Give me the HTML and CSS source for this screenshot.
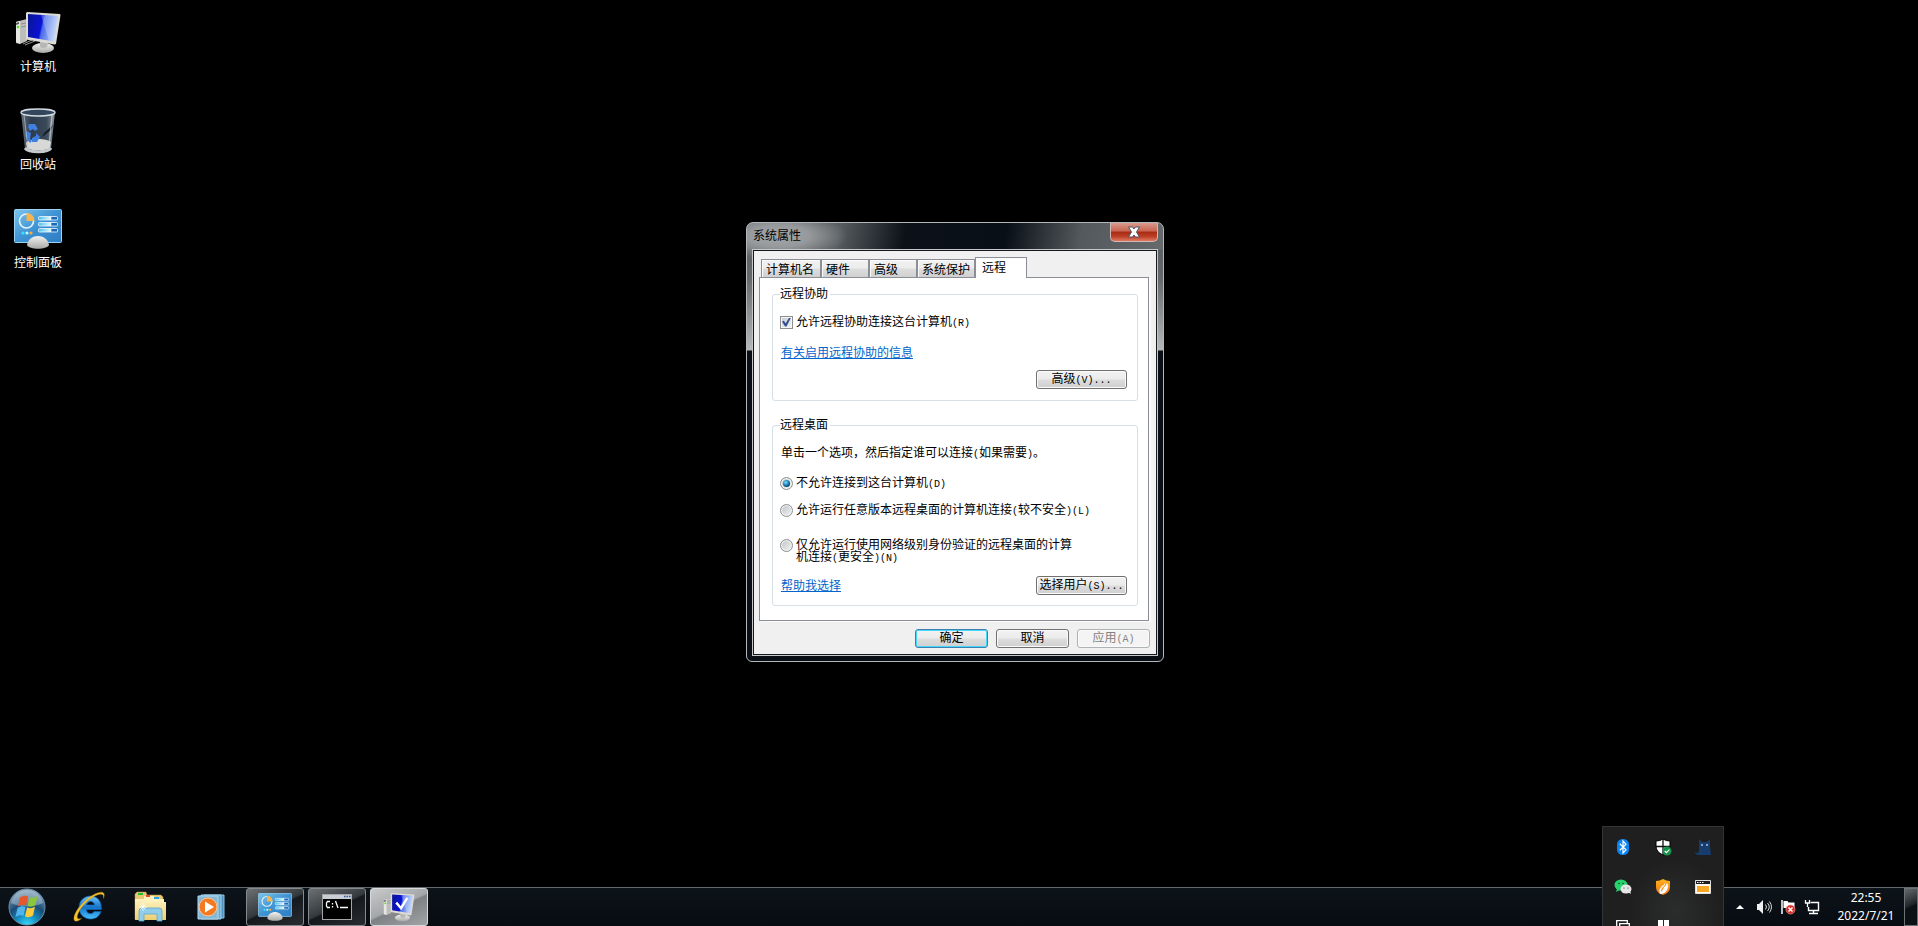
FILE: index.html
```
<!DOCTYPE html>
<html lang="zh-CN">
<head>
<meta charset="utf-8">
<title>系统属性</title>
<link rel="stylesheet" href="styles.css">
</head>
<body>
<svg class="defs" aria-hidden="true">
  <defs>
    <linearGradient id="screen" x1="0" y1="0" x2="1" y2="0.2">
      <stop offset="0" stop-color="#0a1690"/><stop offset=".5" stop-color="#0b12d8"/><stop offset=".56" stop-color="#4a6ae8"/><stop offset="1" stop-color="#b4ccf8"/>
    </linearGradient>
    <linearGradient id="silver" x1="0" y1="0" x2="0" y2="1">
      <stop offset="0" stop-color="#f2f2f0"/><stop offset="1" stop-color="#a8a8a5"/>
    </linearGradient>
    <linearGradient id="glass" x1="0" y1="0" x2="1" y2="0">
      <stop offset="0" stop-color="#66727e"/><stop offset=".3" stop-color="#2d3c4c"/><stop offset=".75" stop-color="#3a4a5a"/><stop offset="1" stop-color="#8d959d"/>
    </linearGradient>
    <linearGradient id="panelBlue" x1="0" y1="0" x2="1" y2="1">
      <stop offset="0" stop-color="#7cc4ee"/><stop offset=".5" stop-color="#3f93d2"/><stop offset="1" stop-color="#2d7dc4"/>
    </linearGradient>
    <linearGradient id="bar" x1="0" y1="0" x2="1" y2="0">
      <stop offset="0" stop-color="#3fc0f0"/><stop offset=".65" stop-color="#e8f8ff"/><stop offset=".7" stop-color="#1d67b8"/><stop offset="1" stop-color="#1d67b8"/>
    </linearGradient>
    <radialGradient id="orb" cx=".5" cy="1" r=".95">
      <stop offset="0" stop-color="#39dcff"/><stop offset=".3" stop-color="#1592c4"/><stop offset=".6" stop-color="#1a4c78"/><stop offset="1" stop-color="#7d9cb4"/>
    </radialGradient>
    <linearGradient id="ie" x1="0" y1="0" x2="0" y2="1">
      <stop offset="0" stop-color="#6cc4f8"/><stop offset=".5" stop-color="#1673cc"/><stop offset="1" stop-color="#4ac0f8"/>
    </linearGradient>
    <linearGradient id="folder" x1="0" y1="0" x2="0" y2="1">
      <stop offset="0" stop-color="#fdf3c0"/><stop offset="1" stop-color="#edcf72"/>
    </linearGradient>
    <linearGradient id="flame" x1="0" y1="0" x2="0" y2="1">
      <stop offset="0" stop-color="#ffb01c"/><stop offset="1" stop-color="#f07818"/>
    </linearGradient>
    <symbol id="computer" viewBox="0 0 46 42">
      <path d="M1 10l3-1 8-2v22l-7 3-4-1z" fill="#bdbdba"/><path d="M1 10l4-1v23l-4-2z" fill="#e6e6e3"/><path d="M1 11l3-1v2l-3 1z" fill="#555"/><circle cx="3" cy="15" r="1.300" fill="#4fdc28"/>
      <path d="M6 12l5-1M6 15l5-1M8 32l9-4M10 33l10-4" stroke="#8f8f8c" fill="none"/>
      <ellipse cx="28" cy="36" rx="11" ry="5" fill="url(#silver)"/><path d="M25 28l8 2-1 5q-4 2-7 0z" fill="#b7b7b4"/>
      <path d="M11 1l1-1 33 2 .5 1-4.500 29-1.500.5-28.500-5z" fill="#dddbd6"/><path d="M13 2l30 2-4 25.500-26-4.500z" fill="url(#screen)"/>
      <path d="M26 3l17 1-4 25.500-5-1z" fill="#e4edff" opacity=".28"/>
    </symbol>
    <symbol id="bin" viewBox="0 0 36 46">
      <path d="M1 4l4 37c2 5 24 5 26 0l4-37z" fill="url(#glass)"/>
      <ellipse cx="18" cy="4.500" rx="17" ry="3.500" fill="#33475a" stroke="#d4dce4" stroke-width="1.400"/>
      <path d="M6 35c3-5 20-5 25-1l-1 6c-4 3-20 3-23 0z" fill="#d8d8d6"/>
      <path d="M5 40c4 5 23 5 26 0" stroke="#c6cacc" stroke-width="3" fill="none"/>
      <path d="M33 17l-9 8-2 4 9-7z" fill="#141d28"/>
      <g fill="#3e7fe0"><path d="M9 16l6 0 3 5-3 2-2-2-3 2-2-4z"/><path d="M6 23l5 2-1 6 2 2-2 2-5-7z"/><path d="M12 30l4-2 0-3 4 4-3 5-5 0z"/></g>
      <path d="M4 7l4 33" stroke="#b9c4ce" opacity=".7"/><path d="M32 7l-3 32" stroke="#dbe0e4" stroke-width="1.500" opacity=".6"/>
    </symbol>
    <symbol id="control" viewBox="0 0 48 40">
      <rect x=".5" y=".5" width="47" height="33" rx="1" fill="url(#panelBlue)" stroke="#9bd4f4"/>
      <circle cx="12.500" cy="12" r="7" fill="none" stroke="#e2f5ff" stroke-width="1.600"/>
      <path d="M12.500 12V4c4 0 8 3 8 8z" fill="#f8b34c"/>
      <circle cx="9" cy="24" r="1.600" fill="#39e0ff"/><circle cx="13" cy="24" r="1.600" fill="#bdf5ff"/><circle cx="17" cy="24" r="1.600" fill="#ffab32"/>
      <g fill="url(#bar)" stroke="#f0faff" stroke-width=".8"><rect x="24.500" y="7.500" width="19" height="3.500" rx="1"/><rect x="24.500" y="13.500" width="19" height="3.500" rx="1"/><rect x="24.500" y="19.500" width="19" height="3.500" rx="1"/></g>
      <path d="M13 36c1-6 6-9 11-9s10 3 11 9c-2 5-20 5-22 0z" fill="url(#silver)"/>
    </symbol>
  </defs>
</svg>

<main class="desktop">
  <nav class="shortcuts" aria-label="桌面">
    <a class="shortcut" href="#"><svg width="46" height="42"><use href="#computer"/></svg><span>计算机</span></a>
    <a class="shortcut" href="#"><svg width="36" height="46"><use href="#bin"/></svg><span>回收站</span></a>
    <a class="shortcut" href="#"><svg width="48" height="40"><use href="#control"/></svg><span>控制面板</span></a>
  </nav>

  <section class="window" role="dialog" aria-labelledby="caption">
    <header class="titlebar">
      <h1 id="caption">系统属性</h1>
      <button class="close" type="button" aria-label="关闭"><svg width="14" height="12" viewBox="0 0 14 12"><path d="M1.500 1h4L7 3l1.500-2h4L9.500 6l3 5h-4L7 9l-1.500 2h-4l3-5z" fill="#fff" stroke="#4d5468" stroke-width="1"/></svg></button>
    </header>
    <form class="client">
      <div class="tabs" role="tablist">
        <button class="tab wide" type="button" role="tab">计算机名</button>
        <button class="tab" type="button" role="tab">硬件</button>
        <button class="tab" type="button" role="tab">高级</button>
        <button class="tab wide" type="button" role="tab">系统保护</button>
        <button class="tab selected" type="button" role="tab" aria-selected="true">远程</button>
      </div>
      <div class="panel" role="tabpanel">
        <fieldset>
          <legend>远程协助</legend>
          <label class="choice"><input type="checkbox" checked><span>允许远程协助连接这台计算机<i>(R)</i></span></label>
          <p class="info"><a href="#">有关启用远程协助的信息</a></p>
          <div class="actions"><button class="button large" type="button">高级<i>(V)...</i></button></div>
        </fieldset>
        <fieldset>
          <legend>远程桌面</legend>
          <p>单击一个选项，然后指定谁可以连接<i>(</i>如果需要<i>)</i>。</p>
          <div class="options">
            <label class="choice"><input type="radio" name="rdp" checked><span>不允许连接到这台计算机<i>(D)</i></span></label>
            <label class="choice"><input type="radio" name="rdp"><span>允许运行任意版本远程桌面的计算机连接<i>(</i>较不安全<i>)(L)</i></span></label>
            <label class="choice tight"><input type="radio" name="rdp"><span>仅允许运行使用网络级别身份验证的远程桌面的计算<br>机连接<i>(</i>更安全<i>)(N)</i></span></label>
          </div>
          <div class="actions spread"><a href="#">帮助我选择</a><button class="button large" type="button">选择用户<i>(S)...</i></button></div>
        </fieldset>
      </div>
      <footer class="commands">
        <button class="button default" type="button">确定</button>
        <button class="button" type="button">取消</button>
        <button class="button" type="button" disabled>应用<i>(A)</i></button>
      </footer>
    </form>
  </section>
</main>

<footer class="taskbar">
  <button class="start" type="button" aria-label="开始">
    <svg width="38" height="38" viewBox="0 0 38 38"><circle cx="19" cy="19" r="18" fill="url(#orb)" stroke="#6c8fa6"/><path d="M3 15C5 6 12 2 19 2s14 4 16 13c-9 4-22 5-32 0z" fill="#dfeaf2" opacity=".36"/>
      <path d="M12 9.500c3-2 6-2 8-1l-2 9c-3-1-5-1-8 1z" fill="#e8562a"/><path d="M21.500 9c3 1 5 1 8-1l-2 9c-3 2-5 2-8 1z" fill="#8cc63c"/><path d="M9.500 20c3-2 5-2 8-1l-2 9c-2-1-5-1-8 1z" fill="#52b4ec"/><path d="M19 19.500c3 1 5 1 8-1l-2 9c-3 2-5 2-8 1z" fill="#fccb3a"/></svg>
  </button>
  <button class="pin" type="button" aria-label="Internet Explorer">
    <svg width="34" height="34" viewBox="0 0 34 34"><path d="M18.500 6C12 6 7 11 7 17.500S12 29 18.500 29c5 0 9-2.500 10.500-7.500h-7c-.8 1.500-2 2-3.500 2-2.500 0-4-1.500-4.200-4h15C30 11.500 25.500 6 18.500 6zm-4 9c.5-2.200 2-3.500 4-3.500s3.700 1.300 4 3.500z" fill="url(#ie)" stroke="#0b62ac" stroke-width=".7"/><path d="M31.500 8.500c2-5.500 0-7.500-6-5.500C14 7 1 22 2 29.500c.7 3 4.500 1.500 7.500-1-3.500 1-5 0-4-3.500C8 17 18 7 26.500 4.500c4-1 5.500 0 5 4z" fill="#f8c52c" stroke="#b88510" stroke-width=".4"/></svg>
  </button>
  <button class="pin" type="button" aria-label="资源管理器">
    <svg width="34" height="32" viewBox="0 0 34 32"><path d="M2 3l2-2h9l1 3h14l2 2v22H2z" fill="#e7c873" stroke="#b99748" stroke-width=".5"/><path d="M11 5h10l1 3h9v5H11z" fill="#fff2ba"/><path d="M5 2h5v2H5z" fill="#20bd37"/><path d="M13 4h4v2h-4z" fill="#e24a37"/><path d="M21 6h5v2h-5z" fill="#2fa2e8"/><path d="M2 8h10l2 3h19v18H2z" fill="url(#folder)"/><path d="M6 30V20q0-3 3-3h17q3 0 3 3v10h-5v-7H11v7z" fill="#8fcdeb" stroke="#5aa6d0" stroke-width=".8"/><path d="M10 12v8M6 16h8M7.500 13.500l5 5M12.500 13.500l-5 5" stroke="#fff" stroke-width=".8"/></svg>
  </button>
  <button class="pin" type="button" aria-label="媒体播放器">
    <svg width="28" height="28" viewBox="0 0 28 28"><path d="M7 2h20v23H7z" fill="#4f91bc" stroke="#8dc4e6"/><path d="M4 2h20v24H4z" fill="#6aaacf" stroke="#9fd0ec"/><path d="M1 3h20v23H1z" fill="#86b7d5" stroke="#b2d9ef"/><circle cx="11" cy="14" r="9" fill="#f37a21" stroke="#ffc694"/><path d="M8 8.500v11l9-5.500z" fill="#fff"/></svg>
  </button>
  <div class="tasks">
    <button class="task" type="button" aria-label="控制面板"><svg width="34" height="28"><use href="#control"/></svg></button>
    <button class="task" type="button" aria-label="命令提示符">
      <svg width="30" height="26" viewBox="0 0 30 26"><rect x=".5" y=".5" width="29" height="25" fill="#000" stroke="#a5a5a5"/><path d="M1 1h28v4H1z" fill="#c9ced4"/><path d="M22 2.500h1.500m1 0H26m1 0h1.500" stroke="#2b57a8" stroke-width="1.500"/><path d="M8 7.500H5.500L4.500 9v3l1 1.500H8M10.500 9v1.500m0 1.500v1.500M13.500 7l2.500 7M18 13.500h8" stroke="#fff" stroke-width="1.300" fill="none"/></svg>
    </button>
    <button class="task active" type="button" aria-label="系统属性">
      <svg width="32" height="29" viewBox="0 0 46 42"><use href="#computer" width="46" height="42"/><path d="M19 14l7 8 9-15" stroke="#fff" stroke-width="3.500" fill="none"/></svg>
    </button>
  </div>
  <div class="tray">
    <svg class="edge" width="3" height="4"><path d="M0 .5h2.500V4" stroke="#aaa" fill="none"/></svg>
    <button class="more" type="button" aria-label="显示隐藏的图标"><svg width="8" height="4"><path d="M0 4l4-4 4 4z" fill="#fff"/></svg></button>
    <svg width="16" height="16" viewBox="0 0 16 16"><path d="M1 5h2l4-4v14l-4-4H1z" fill="#f0f0f0"/><path d="M9.500 5.500q2 2.500 0 5M11.500 4q3.500 4 0 8M13.500 2.500q4 5.500 0 11" stroke="#d6d6d6" fill="none"/></svg>
    <svg width="16" height="16" viewBox="0 0 16 16"><path d="M2 1v14" stroke="#fff" stroke-width="1.500"/><path d="M3.500 2h4l1 1.500h6V10h-6l-1-1h-4z" fill="#fff"/><circle cx="10.500" cy="10.500" r="4.500" fill="#dc2c27" stroke="#f5a6a0" stroke-width=".6"/><path d="M8.500 8.500l4 4m0-4l-4 4" stroke="#fff" stroke-width="1.500"/></svg>
    <svg width="16" height="16" viewBox="0 0 16 16"><path d="M6.500 3.500h8v8H4.500V8M9.500 12v2M5 14.500h9" stroke="#fff" stroke-width="1.400" fill="none"/><path d="M1.500 1v3h4V1M3.500 4v4" stroke="#fff" stroke-width="1.300" fill="none"/></svg>
    <div class="clock"><time>22:55</time><time>2022/7/21</time></div>
    <button class="show-desktop" type="button" aria-label="显示桌面"></button>
  </div>
</footer>

<aside class="overflow" aria-label="通知区域">
  <svg width="16" height="18" viewBox="0 0 16 18"><rect x="2" y="1" width="12" height="16" rx="5.500" fill="#0a84f5"/><path d="M4.800 5.800l6.200 6L8 15V3l3 3.200-6.200 6" stroke="#fff" stroke-width="1.200" fill="none"/></svg>
  <svg width="18" height="18" viewBox="0 0 18 18"><path d="M9 1q-3 2-7 2v5q0 6 7 9 7-3 7-9V3q-4 0-7-2z" fill="#fff" stroke="#000"/><path d="M9 1v16M2 8.500h14" stroke="#111" stroke-width="1.300"/><circle cx="13" cy="13" r="4.500" fill="#17924a"/><path d="M10.800 13l1.600 1.600 3-3" stroke="#fff" stroke-width="1.200" fill="none"/></svg>
  <svg width="18" height="18" viewBox="0 0 18 18"><path d="M5 1l3 3h5l3-3v8l1 8H5q-4 0-4-3l2 1 2-1z" fill="#173c6e"/><circle cx="8" cy="7" r=".9" fill="#b6d4f5"/><circle cx="13" cy="7" r=".9" fill="#b6d4f5"/></svg>
  <svg width="18" height="18" viewBox="0 0 18 18"><ellipse cx="7" cy="7" rx="6.500" ry="5.500" fill="#27d36b"/><path d="M3 11l-1 3 4-2z" fill="#27d36b"/><ellipse cx="12" cy="11" rx="5.500" ry="4.500" fill="#e6e6e6"/><path d="M14 14l3 2-1-4z" fill="#e6e6e6"/><g fill="#164d2c"><circle cx="5" cy="5.500" r=".8"/><circle cx="9" cy="5.500" r=".8"/><circle cx="10" cy="10" r=".6"/><circle cx="14" cy="10" r=".6"/></g></svg>
  <svg width="16" height="18" viewBox="0 0 16 18"><path d="M8 1q-3 2-7 2v6q0 6 7 8 7-2 7-8V3q-4 0-7-2z" fill="url(#flame)"/><path d="M10 2q1 4-3 6-4 4-2 8 5 0 7-4 2-4 0-7-1 3-3 4-1 3-3 5 0-4 3-6 2-2 1-6z" fill="#fff"/></svg>
  <svg width="16" height="14" viewBox="0 0 16 14"><rect x=".7" y=".7" width="14.600" height="12.600" fill="#fff8ec" stroke="#fff"/><path d="M1 1h14v3H1z" fill="#1f1f1f"/><path d="M2 2.500h1.500m1 0H6m1 0h1.500" stroke="#fff" stroke-width="1.200"/><path d="M2 6h12v6H2z" fill="#f9a825"/></svg>
  <svg width="14" height="14" viewBox="0 0 14 14"><path d="M3 9.500H.7V.7h10.600V3M3.700 3.700h9.600v9.600H3.700z" stroke="#fff" stroke-width="1.300" fill="none"/></svg>
  <svg width="11" height="14" viewBox="0 0 11 14"><path d="M0 0h5v6H0zM6 0h5v6H6zM0 7h5v7H0zM6 7h5v7H6z" fill="#fff"/></svg>
</aside>
</body>
</html>
```
FILE: styles.css
```
* { box-sizing: border-box; }
body {
  margin: 0;
  height: 100vh;
  display: flex;
  flex-direction: column;
  overflow: hidden;
  background: #000;
  font: 12px/16px "Liberation Sans", "Noto Sans CJK SC", sans-serif;
  color: #000;
}
button { font: inherit; color: inherit; padding: 0; border: 0; background: none; }
svg { display: block; }
p { margin: 0; }
a { color: #06c; }
i { font: 10px/12px "Liberation Mono", monospace; }
.defs { position: absolute; width: 0; height: 0; }

.desktop { flex: 1; position: relative; }
.shortcuts { display: flex; flex-direction: column; width: 76px; padding-top: 8px; }
.shortcut {
  height: 98px;
  display: grid;
  grid-template-rows: 50px 18px;
  justify-items: center;
  align-items: center;
  align-content: start;
  color: #fff;
  text-decoration: none;
}

.window {
  position: absolute;
  left: 746px;
  top: 222px;
  width: 418px;
  padding: 0 5px 5px;
  border: 1px solid #b4b7ba;
  border-radius: 7px 7px 6px 6px;
  background:
    radial-gradient(ellipse 68px 24px at 32px 13px, #a4a7aa 0, #a4a7aacc 45%, transparent),
    linear-gradient(98deg, #686c6f 0, #585d61 22%, #0b1117 38%, #090f16 62%, #54595d 80%, #666a6d) 0 0 / 100% 27px no-repeat,
    linear-gradient(#55595c 0, #66696b 55px, #b5b7b9 127px, #0a0f16 128px);
}
.titlebar { display: flex; justify-content: space-between; height: 26px; }
h1 { margin: 5px 1px; font-size: 12px; line-height: 16px; font-weight: 400; }
.close {
  display: grid;
  place-items: center;
  width: 48px;
  height: 19px;
  border: 1px solid #d4b8b4;
  border-top: 0;
  border-radius: 0 0 5px 5px;
  background: linear-gradient(#d99a8c, #c86552 45%, #a82a12 50%, #bc4028 75%, #e07a60);
}
.client {
  border: 1px solid #c5c8ca;
  outline: 1px solid #15191d;
  outline-offset: -2px;
  padding: 7px 7px 7px 6px;
  background: #f0f0f0;
}
.tabs { display: flex; align-items: flex-end; padding-left: 2px; height: 20px; }
.tab {
  width: 48px;
  height: 18px;
  padding: 2px 0 0 4px;
  text-align: left;
  white-space: nowrap;
  border: 1px solid #8c8e97;
  border-bottom: 0;
  background: linear-gradient(#f2f2f2, #ececec 48%, #ddd 52%, #d0d0d0);
  box-shadow: inset 1px 1px #fbfbfb;
}
.tab.wide { width: 60px; }
.tab.wide:nth-child(4) { width: 58px; }
.tab.selected { width: 52px; height: 21px; padding: 0 0 1px 6px; margin-bottom: -1px; background: #fff; position: relative; }
.panel {
  height: 344px;
  margin-right: 1px;
  border: 1px solid #8c8e97;
  padding: 8px 10px 0 12px;
  background: #fff;
  box-shadow: 2px 1px #fbfbfb;
}
fieldset { min-width: 0; margin: 0 0 16px; padding: 12px 10px 11px 8px; border: 1px solid #d5dfe5; border-radius: 3px; }
fieldset + fieldset { padding-bottom: 10px; }
legend { padding: 0 2px 0 0; margin-left: -1px; }
.choice { display: flex; align-items: center; gap: 3px; }
.choice.tight { margin-top: 10px; align-items: flex-start; line-height: 12px; }
.options { display: flex; flex-direction: column; gap: 11px; padding: 14px 0 11px; }
.info { padding: 15px 0 9px; }
.actions { display: flex; justify-content: flex-end; }
.actions.spread { justify-content: space-between; align-items: center; }
input { appearance: none; flex: none; width: 13px; height: 13px; margin: 0 0 0 -1px; display: grid; place-items: center; }
input[type="checkbox"] {
  border: 1px solid #8e8f8f;
  box-shadow: inset 0 0 0 1px #f6f6f6;
  background: linear-gradient(135deg, #c3c9d0, #f4f5f6);
}
input[type="checkbox"]:checked::after {
  content: "";
  width: 9px;
  height: 9px;
  background: #364f92;
  clip-path: polygon(0 45%, 20% 35%, 42% 65%, 80% 0, 100% 0, 50% 100%, 34% 100%);
}
input[type="radio"] {
  border: 1px solid #8e8f8f;
  border-radius: 50%;
  box-shadow: inset 0 0 0 1px #f4f4f4;
  background: linear-gradient(135deg, #bfc4c8, #f2f2f2);
}
input[type="radio"]:checked::after {
  content: "";
  width: 7px;
  height: 7px;
  border-radius: 50%;
  background: radial-gradient(circle at 40% 35%, #8fdcf7, #1781b8 45%, #0a2f4c 80%);
}
.button {
  width: 73px;
  height: 19px;
  line-height: 15px;
  white-space: nowrap;
  border: 1px solid #707070;
  border-radius: 3px;
  background: linear-gradient(#f2f2f2, #ebebeb 48%, #ddd 52%, #cfcfcf);
  box-shadow: inset 0 0 0 1px #fafafa;
}
.button.large { width: 91px; }
.button.default { border-color: #3c7fb1; box-shadow: inset 0 0 0 1px #46d8fb; }
.button:disabled { color: #838383; border-color: #adb2b5; background: #f4f4f4; }
.commands { display: flex; justify-content: flex-end; gap: 8px; padding-top: 8px; }

.taskbar {
  flex: none;
  display: flex;
  height: 39px;
  border-top: 1px solid #63686c;
  background: linear-gradient(#0c1319, #070c12);
}
.start { width: 58px; padding: 0 8px; }
.pin { width: 61px; display: grid; place-items: center; }
.tasks { display: flex; gap: 4px; align-items: flex-start; padding-left: 5px; }
.task {
  display: grid;
  place-items: center;
  width: 58px;
  height: 38px;
  border: 1px solid #868a8d;
  border-radius: 3px;
  background: linear-gradient(155deg, #6c7073, #34393d 48%, #15191d 52%, #292d31);
}
.task.active { border-color: #d7d9da; background: linear-gradient(155deg, #c8cacb, #a4a7a9 48%, #7e8183 52%, #a2a5a7); }
.tray { margin-left: auto; display: flex; align-items: center; gap: 8px; }
.edge { align-self: flex-start; margin-top: 8px; }
.more { padding: 4px; }
.clock { display: grid; justify-items: center; width: 76px; color: #fff; font: 12px/18px "Noto Sans", sans-serif; }
.show-desktop { width: 14px; height: 38px; margin-left: -8px; border: 1px solid #6d7276; background: linear-gradient(155deg, #65696c, #20252a 45%, #0c1116 50%); }

.overflow {
  position: absolute;
  right: 194px;
  bottom: 0;
  width: 122px;
  height: 100px;
  display: grid;
  grid-template-columns: repeat(3, 40px);
  grid-auto-rows: 40px;
  place-items: center;
  overflow: hidden;
  border: 1px solid #343434;
  border-bottom: 0;
  background: radial-gradient(ellipse at 60% 85%, #2b2d2c, #1f1f1f 45%);
}
```
